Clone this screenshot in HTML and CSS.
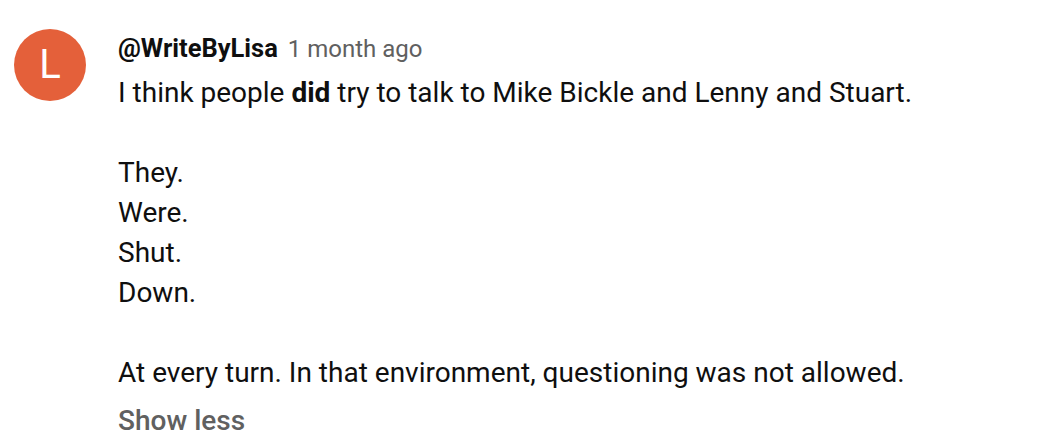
FILE: index.html
```html
<!DOCTYPE html>
<html>
<head>
<meta charset="utf-8">
<link rel="stylesheet" href="styles.css">
</head>
<body>
<div class="comment">
  <div class="avatar">L</div>
  <div class="main">
    <div class="header">
      <span class="author">@WriteByLisa</span>
      <span class="time">1 month ago</span>
    </div>
    <div class="text">
      <p>I think people <b>did</b> try to talk to Mike Bickle and Lenny and Stuart.</p>
      <p class="blank">&nbsp;</p>
      <p>They.</p>
      <p>Were.</p>
      <p>Shut.</p>
      <p>Down.</p>
      <p class="blank">&nbsp;</p>
      <p>At every turn. In that environment, questioning was not allowed.</p>
    </div>
    <div class="more">Show less</div>
  </div>
</div>
</body>
</html>
```
FILE: styles.css
```css
html, body {
  margin: 0;
  padding: 0;
  background: #ffffff;
}
body {
  font-family: Roboto, "Liberation Sans", sans-serif;
  color: #0f0f0f;
}
.comment {
  display: flex;
  align-items: flex-start;
  gap: 32px;
  padding: 29px 0 0 14px;
}
.avatar {
  flex: none;
  width: 72px;
  height: 72px;
  border-radius: 50%;
  background: #e4603a;
  color: #ffffff;
  font-size: 40px;
  line-height: 72px;
  text-align: center;
  font-weight: 400;
}
.main {
  display: flex;
  flex-direction: column;
  padding-top: 3px;
}
.header {
  font-size: 24px;
  line-height: 32px;
  white-space: nowrap;
}
.author {
  font-size: 25.5px;
  font-weight: 700;
  color: #0f0f0f;
}
.time {
  color: #606060;
  margin-left: 4px;
}
.text {
  margin-top: 8px;
  font-size: 28px;
  line-height: 40px;
}
.text p {
  margin: 0;
}
.text b {
  font-weight: 700;
}
.more {
  margin-top: 8px;
  font-size: 28px;
  line-height: 40px;
  color: #606060;
  font-weight: 500;
}
```
